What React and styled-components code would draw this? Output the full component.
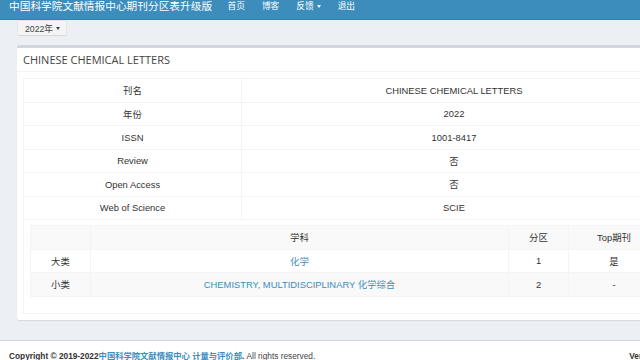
import React from 'react';
import styled, { createGlobalStyle } from 'styled-components';

const GlobalStyle = createGlobalStyle`
  html, body {
    margin: 0;
    padding: 0;
    overflow: hidden;
    background: #ecf0f5;
    font-family: "Liberation Sans", "Noto Sans CJK SC", sans-serif;
  }
`;

const info = [
  ['刊名', 'CHINESE CHEMICAL LETTERS'],
  ['年份', '2022'],
  ['ISSN', '1001-8417'],
  ['Review', '否'],
  ['Open Access', '否'],
  ['Web of Science', 'SCIE'],
];

const App = () => {
  return (
    <Page>
      <GlobalStyle />
      <Header>
        <Brand>中国科学院文献情报中心期刊分区表升级版</Brand>
        <Nav>
          <NavItem>首页</NavItem>
          <NavItem>博客</NavItem>
          <NavItem>反馈<Caret $color="#fff" /></NavItem>
          <NavItem>退出</NavItem>
        </Nav>
      </Header>

      <Toolbar>
        <YearButton>2022年<Caret $color="#444" /></YearButton>
      </Toolbar>

      <Box>
        <BoxHeader>CHINESE CHEMICAL LETTERS</BoxHeader>
        <BoxBody>
          <InfoTable>
            <colgroup>
              <col style={{ width: 218 }} />
              <col />
            </colgroup>
            <tbody>
              {info.map(([k, v]) => (
                <tr key={k}>
                  <td>{k}</td>
                  <td>{v}</td>
                </tr>
              ))}
              <tr>
                <NestCell colSpan={2}>
                  <SubjectTable>
                    <colgroup>
                      <col style={{ width: 60 }} />
                      <col />
                      <col style={{ width: 60 }} />
                      <col style={{ width: 91 }} />
                    </colgroup>
                    <tbody>
                      <tr>
                        <td></td>
                        <td>学科</td>
                        <td>分区</td>
                        <td>Top期刊</td>
                      </tr>
                      <tr>
                        <td>大类</td>
                        <td><Link>化学</Link></td>
                        <td>1</td>
                        <td>是</td>
                      </tr>
                      <tr>
                        <td>小类</td>
                        <td><Link>CHEMISTRY, MULTIDISCIPLINARY 化学综合</Link></td>
                        <td>2</td>
                        <td>-</td>
                      </tr>
                    </tbody>
                  </SubjectTable>
                </NestCell>
              </tr>
            </tbody>
          </InfoTable>
        </BoxBody>
      </Box>

      <Footer>
        <span>
          <strong>Copyright © 2019-2022<Link>中国科学院文献情报中心 计量与评价部</Link>.</strong> All rights reserved.
        </span>
        <span><b>Version</b> 2.4.0</span>
      </Footer>
    </Page>
  );
};

export default App;

const Page = styled.div`
  width: 690px;
  min-height: 360px;
`;

const Header = styled.header`
  height: 19px;
  background: #3c8dbc;
  border-bottom: 1px solid #367fa9;
  display: flex;
  align-items: flex-start;
  color: #fff;
`;

const Brand = styled.div`
  width: 219px;
  box-sizing: border-box;
  padding-left: 9px;
  font-size: 10.7px;
  line-height: 12px;
  white-space: nowrap;
`;

const Nav = styled.nav`
  display: flex;
`;

const NavItem = styled.a`
  display: flex;
  align-items: center;
  padding: 0 8.5px;
  font-size: 8.7px;
  line-height: 12px;
  color: #fff;
`;

const Caret = styled.span`
  display: inline-block;
  margin-left: 3px;
  width: 0;
  height: 0;
  border-top: 3px solid ${(p) => p.$color};
  border-left: 2.5px solid transparent;
  border-right: 2.5px solid transparent;
`;

const Toolbar = styled.div`
  padding: 0 17px;
  margin-bottom: 9px;
  display: flex;
`;

const YearButton = styled.button`
  display: flex;
  align-items: center;
  height: 16px;
  box-sizing: border-box;
  padding: 0 6px 0 7px;
  background: #f4f4f4;
  border: 1px solid #e4e4e4;
  border-bottom-color: #d8d8d8;
  border-radius: 2px;
  color: #444;
  font-family: "Liberation Sans", "Noto Sans CJK SC", sans-serif;
  font-size: 8.7px;
`;

const Box = styled.section`
  margin: 0 17px;
  background: #fff;
  border-top: 3px solid #d2d6de;
  border-radius: 2px;
  box-shadow: 0 1px 1px rgba(0, 0, 0, 0.1);
`;

const BoxHeader = styled.div`
  height: 24px;
  box-sizing: border-box;
  padding: 0 6px;
  display: flex;
  align-items: center;
  border-bottom: 1px solid #f4f4f4;
  font-family: "Open Sans", sans-serif;
  font-size: 11px;
  color: #444;
`;

const BoxBody = styled.div`
  padding: 6px;
`;

const InfoTable = styled.table`
  width: 100%;
  border-collapse: collapse;
  table-layout: fixed;
  font-size: 9.4px;
  color: #333;

  td {
    border: 1px solid #f4f4f4;
    height: 22.5px;
    padding: 0;
    text-align: center;
  }
`;

const NestCell = styled.td`
  && {
    padding: 5px 6px 16px;
    height: auto;
  }
`;

const SubjectTable = styled.table`
  width: 100%;
  border-collapse: collapse;
  table-layout: fixed;

  && td {
    border: 1px solid #f4f4f4;
    height: 22.5px;
    padding: 0;
    text-align: center;
  }
  tr:nth-child(odd) {
    background: #f9f9f9;
  }
`;

const Link = styled.a`
  color: #3c8dbc;
  text-decoration: none;
`;

const Footer = styled.footer`
  margin-top: 20px;
  background: #fff;
  border-top: 1px solid #d2d6de;
  padding: 10px 10px 10px 9px;
  display: flex;
  justify-content: space-between;
  font-size: 8.3px;
  line-height: 10px;
  color: #444;

  strong, b {
    color: #333;
  }
  strong a {
    font-weight: 700;
  }
`;
